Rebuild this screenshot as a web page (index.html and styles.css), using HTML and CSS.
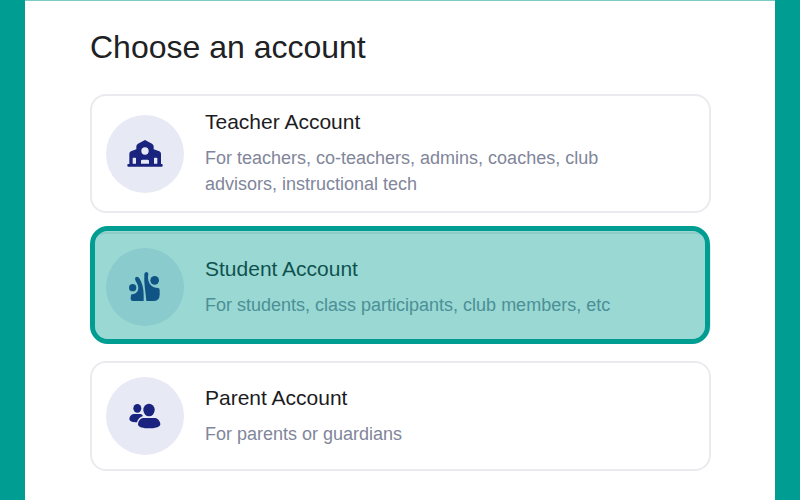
FILE: index.html
```html
<!DOCTYPE html>
<html lang="en">
<head>
    <meta charset="UTF-8">
    <meta name="viewport" content="width=device-width, initial-scale=1.0">
    <title>Choose an account</title>
    <link rel="stylesheet" href="styles.css">
</head>
<body>
    <main class="panel">
        <h1>Choose an account</h1>
        <div class="accounts">
            <button type="button" class="account">
                <span class="icon">
                    <svg viewBox="81 91 108 108" aria-hidden="true">
                        <path fill-rule="evenodd" d="M135 103L156 114Q161 117 161 122V131L178 137Q183 139 183 144V175H186Q188 175 188 179T186 183H84Q82 183 82 179T84 175H88V144Q88 139 93 137L109 131V122Q109 117 114 114ZM135 125A11 11 0 1 0 135 147A11 11 0 1 0 135 125ZM98 158V174H108V158Q108 156 106 156H100Q98 156 98 158ZM162 158V174H172V158Q172 156 170 156H164Q162 156 162 158ZM123 174V166Q123 162 127 162H143Q147 162 147 166V174Z"/>
                    </svg>
                </span>
                <span class="text">
                    <span class="name">Teacher Account</span>
                    <span class="info">For teachers, co-teachers, admins, coaches, club advisors, instructional tech</span>
                </span>
            </button>
            <button type="button" class="account selected">
                <span class="icon">
                    <svg viewBox="81 86 108 108" aria-hidden="true">
                        <circle cx="98" cy="142" r="11"/>
                        <circle cx="164" cy="120" r="13"/>
                        <path d="M105 116Q105 109 111 109Q115 109 118 114C127 128 131 145 131 164V182H99Q92 182 92 176Q92 169 94 162C108 161 115 153 115 142C115 132 106 124 105 116Z"/>
                        <path d="M133 101Q134 95 140 95Q145 96 145 102C143 111 144 119 147 126C151 136 160 143 174 143Q179 143 179 149V164Q178 182 160 182H139C137 154 131 128 133 101Z"/>
                    </svg>
                </span>
                <span class="text">
                    <span class="name">Student Account</span>
                    <span class="info">For students, class participants, club members, etc</span>
                </span>
            </button>
            <button type="button" class="account">
                <span class="icon">
                    <svg viewBox="81 83 108 108" aria-hidden="true">
                        <ellipse cx="112" cy="114" rx="12" ry="13"/>
                        <ellipse cx="147" cy="119" rx="17" ry="19"/>
                        <path d="M100 131H122Q127 132 129 137C119 140 113 147 111 156Q90 157 88 147Q88 135 100 131Z"/>
                        <path d="M129 143H166C175 145 181 154 181 163C179 170 164 174 147 174S115 170 114 163C114 153 120 145 129 143Z"/>
                    </svg>
                </span>
                <span class="text">
                    <span class="name">Parent Account</span>
                    <span class="info">For parents or guardians</span>
                </span>
            </button>
        </div>
    </main>
</body>
</html>
```
FILE: styles.css
```css
* {
    box-sizing: border-box;
}

body {
    margin: 0;
    padding: 0 25px;
    background-color: #009e92;
    font-family: "Liberation Sans", Arial, sans-serif;
}

.panel {
    min-height: 100vh;
    padding: 28px 64px 29px 65px;
    border-top: 1px solid #7accc5;
    background-color: #fff;
}

h1 {
    margin: 0 0 29px;
    color: #202124;
    font-size: 32px;
    font-weight: normal;
    line-height: 36px;
}

.accounts {
    display: flex;
    flex-direction: column;
    gap: 19px;
}

.account {
    position: relative;
    display: flex;
    align-items: center;
    gap: 21px;
    width: 100%;
    padding: 14px;
    border: 2px solid #ebebef;
    border-radius: 16px;
    background-color: #fff;
    font-family: inherit;
    text-align: left;
    cursor: pointer;
}

/* tinted frame around the chosen account */
.selected::after {
    content: "";
    position: absolute;
    inset: -8px -1px -4px -2px;
    border: 5px solid #009e92;
    border-radius: 18px;
    background-color: rgba(0, 158, 146, 0.4);
    background-clip: padding-box;
}

.icon {
    display: flex;
    flex: none;
    align-items: center;
    justify-content: center;
    width: 78px;
    height: 78px;
    border-radius: 50%;
    background-color: #e7e9f5;
}

.icon svg {
    width: 36px;
    height: 36px;
    fill: #1a237e;
}

.text {
    display: flex;
    flex: 1;
    flex-direction: column;
    gap: 11px;
    padding-right: 60px;
}

.name {
    color: #1c1c1f;
    font-size: 21px;
    line-height: 24px;
}

.info {
    color: #81869a;
    font-size: 18px;
    line-height: 26px;
}
```
